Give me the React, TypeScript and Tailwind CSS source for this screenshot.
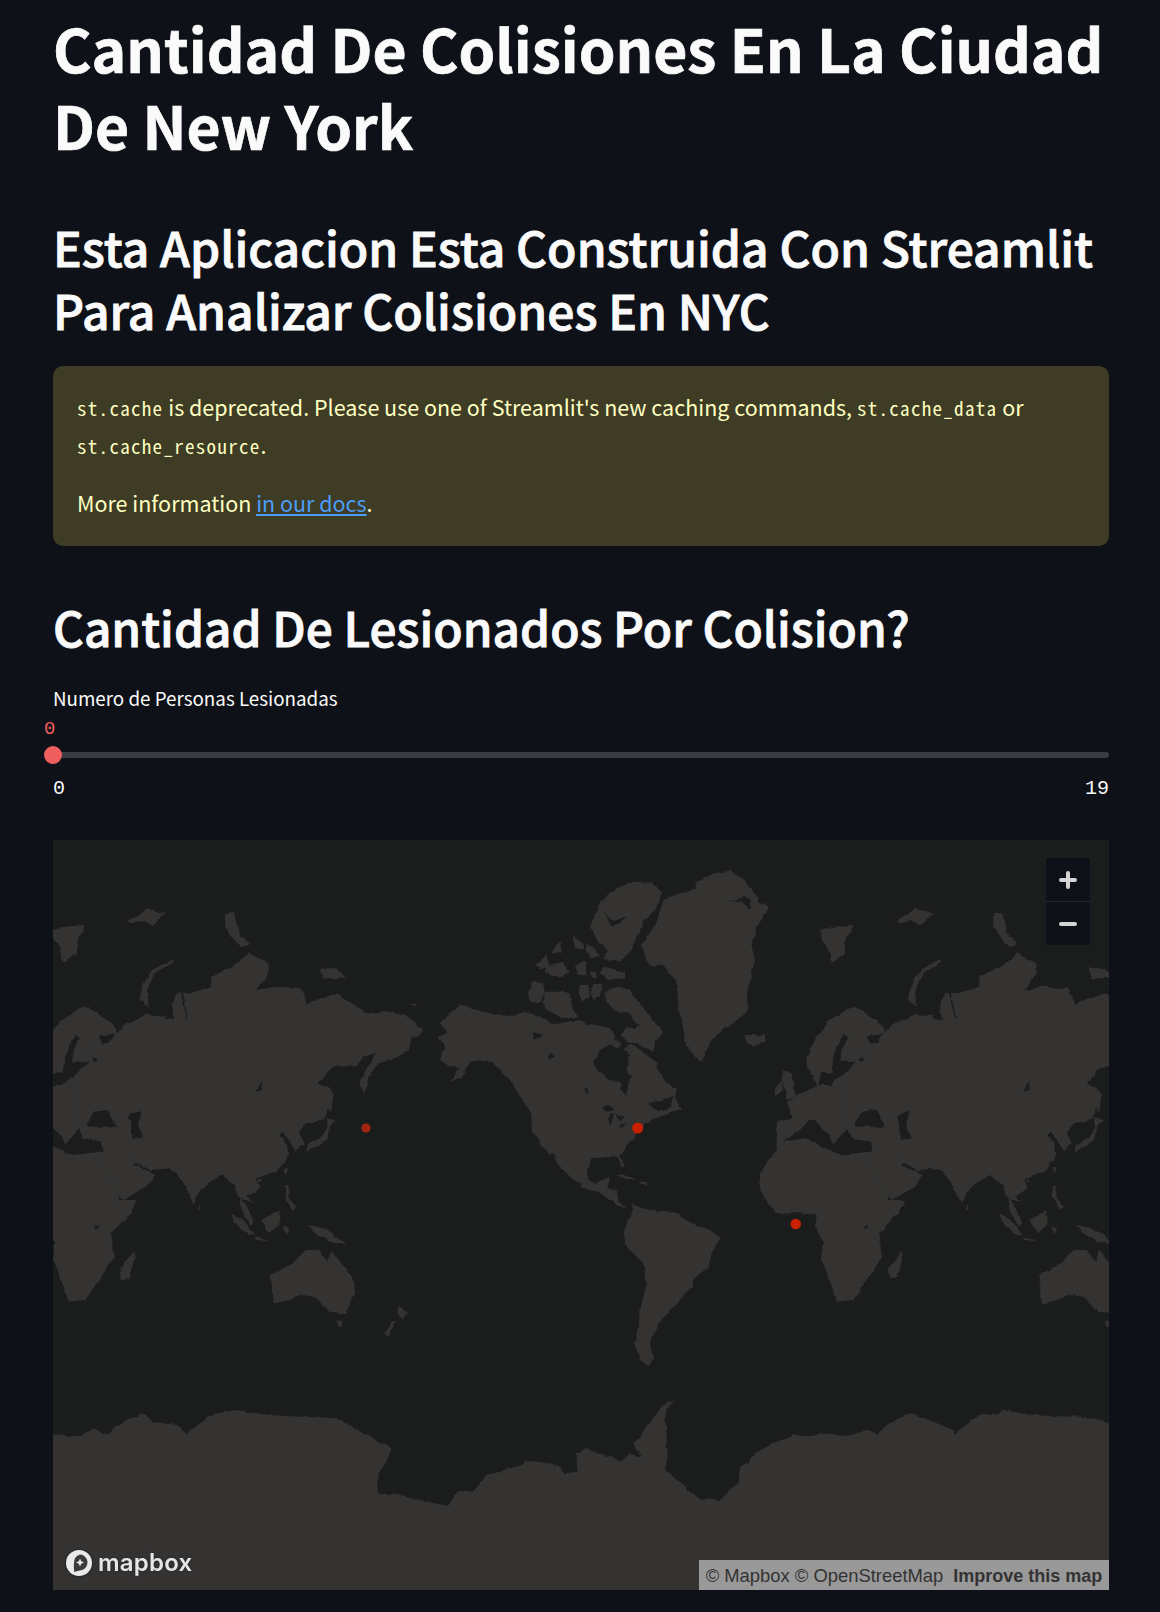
import React from "react";

type T = [number, number, number, number];
const Z11: T = [430, 860, 3, 3];
const Z12: T = [510, 1110, 3, 3];
const Z4: T = [600, 830, 3, 3];
const Z6: T = [600, 1200, 3, 3];
const Z3: T = [808, 830, 2.8, 3];
const Z5: T = [808, 1200, 2.8, 3];
const ZA: T = [40, 1200, 2.8, 3];

const conv = (t: T, s: string) =>
  s
    .trim()
    .split(/\s+/)
    .map((p) => {
      const [x, y] = p.split(",").map(Number);
      return `${(t[0] + x / t[2]).toFixed(1)},${(t[1] + y / t[3]).toFixed(1)}`;
    })
    .join(" ");

const land: [T, string][] = [
  [Z11, "35,482 62,458 95,433 130,447 175,455 225,470 275,458 312,462 345,478 365,492 400,490 440,478 470,492 500,495 540,505 555,525 540,555 510,570 492,600 500,630 540,660 575,670 570,690 585,705 605,650 590,625 600,585 580,570 600,550 640,575 680,610 680,625 710,670 740,690 735,710 755,750 720,760 695,770 670,775 640,800 600,835 585,870 350,870 305,800 305,760 280,725 240,660 190,610 150,600 120,605 95,650 60,665 90,625 60,620 30,600 45,560 25,530 50,520 30,490"],
  [Z11, "545,385 600,385 620,420 640,440 665,475 700,520 680,540 670,575 630,555 600,545 570,530 590,500 610,510 630,495 590,455 560,460 535,430 520,400"],
  [Z11, "545,530 575,555 560,565 540,550"],
  [Z11, "305,365 340,370 345,395 330,430 300,425 295,400"],
  [Z11, "345,395 400,395 420,400 430,450 445,470 400,475 350,450 340,430"],
  [Z11, "450,375 475,375 480,410 455,425 445,405"],
  [Z11, "490,375 515,372 510,410 490,420 482,400"],
  [Z11, "520,320 585,335 585,355 530,358 510,340"],
  [Z11, "510,125 560,85 610,65 665,68 700,95 680,140 640,190 620,230 605,270 570,305 520,300 530,270 500,240 480,200 500,150"],
  [Z11, "315,315 350,285 355,320 335,325"],
  [Z11, "345,320 395,305 420,335 385,355 350,340"],
  [Z11, "435,315 465,305 470,345 445,345"],
  [Z11, "380,250 395,245 395,280 365,280"],
  [Z11, "425,225 450,240 465,270 435,260"],
  [Z11, "470,245 490,260 510,290 480,295 470,270"],
  [Z11, "480,335 495,335 497,355 485,355"],
  [Z11, "800,65 855,40 900,32 935,55 965,90 990,125 1018,140 1000,170 980,200 965,260 975,300 965,340 950,400 955,450 920,485 880,505 840,540 825,585 815,605 790,590 765,540 755,480 745,440 740,365 700,315 660,318 640,275 635,255 680,185 700,120 760,100 795,85"],
  [Z11, "945,525 985,525 1005,520 1005,545 975,562 955,550"],
  [Z12, "65,0 65,65 105,115 130,150 185,205 235,240 265,245 320,285 345,295 345,290 325,270 320,240 292,235 300,205 290,200 255,222 235,205 232,175 245,145 290,140 325,140 335,172 345,170 330,135 350,110 380,70 440,10 445,0"],
  [Z12, "320,195 350,195 380,210 345,205 325,198"],
  [Z12, "390,215 412,215 410,222 392,222"],
  [Z6, "70,100 100,30 95,15 150,30 220,35 265,65 330,90 362,115 335,160 325,205 285,230 275,260 240,300 220,320 175,370 150,430 160,480 145,497 120,480 105,430 115,370 125,310 140,250 130,190 90,150 70,115"],
  [Z4, "530,925 530,875 578,865 560,815 600,795 650,765 640,735 620,710 620,680 650,620 690,570 760,528 840,580 855,610 880,580 950,560 1000,555 1000,1000 900,1000 530,1000"],
  [Z3, "100,700 230,600 300,550 330,565 375,570 370,520 385,490 395,490 415,580 395,605 415,565 400,490 420,490 480,470 480,440 540,410 585,370 640,400 640,430 605,480 660,470 730,475 750,525 760,515 830,490 870,520 920,550 980,545 1030,560 1070,600 1060,620 1040,620 1035,660 985,690 945,700 920,745 905,795 895,760 940,670 905,680 890,705 820,710 780,760 810,775 815,820 795,870 745,880 725,905 738,940 715,965 700,935 680,905 670,915 690,940 695,970 690,990 660,1025 605,1045 615,1075 580,1100 600,1120 555,1100 545,1065 510,1035 470,1060 445,1085 430,1125 395,1045 365,1015 310,1020 270,1000 255,980 262,1005 300,1020 320,1035 300,1070 235,1110 220,1095 170,995 175,975 100,975"],
  [Z4, "550,720 575,730 585,790 590,800 560,810 555,780 545,750"],
  [Z4, "525,770 545,755 550,780 525,795"],
  [Z4, "1020,390 1028,395 970,430 945,480 950,530 925,510 930,470 960,420"],
  [Z4, "660,300 700,290 755,285 755,305 735,320 735,370 695,395 680,350 665,330"],
  [Z4, "885,270 915,260 945,235 1000,250 960,285 930,270 900,280"],
  [Z4, "1180,250 1205,245 1225,320 1255,340 1230,352 1180,295"],
  [Z3, "785,415 825,415 860,440 825,445 795,445"],
  [Z3, "1035,522 1055,520 1050,527"],
  [Z3, "812,780 822,790 815,850 808,830"],
  [Z3, "800,865 830,870 810,885 805,925 785,945 745,965 750,945 790,920 805,890"],
  [Z3, "685,1015 695,1015 688,1035"],
  [Z3, "612,1045 622,1050 612,1058"],
  [Z3, "690,1065 697,1065 695,1095 700,1110 720,1130 705,1140 685,1095"],
  [Z3, "445,1125 452,1140 442,1140"],
  [Z3, "560,1100 580,1130 600,1180 590,1190 565,1140"],
  [Z5, "535,40 570,60 600,105 585,105 545,70"],
  [Z5, "600,112 650,125 605,120"],
  [Z5, "620,60 670,30 670,75 640,100"],
  [Z5, "680,80 695,85 690,105"],
  [Z5, "750,75 800,85 860,135 810,125 770,100"],
  [Z5, "645,225 700,195 745,150 780,150 805,185 815,150 880,240 880,280 855,340 810,335 770,290 730,285 700,300 655,310 650,265"],
  [Z5, "832,362 848,362 845,380 835,380"],
  [Z5, "1005,318 1028,340 1015,358 1000,340"],
  [Z5, "1000,360 975,405 963,400 985,365"],
  [Z6, "905,155 908,175 890,235 870,238 865,205"],
];

const water: [T, string][] = [
  [Z11, "310,515 340,525 315,540"],
  [Z11, "350,590 365,578 375,590 360,598"],
  [Z11, "462,685 470,682 476,700 468,700"],
  [Z11, "515,745 535,735 555,750 530,755"],
  [Z11, "540,760 552,760 545,795 537,795"],
  [Z11, "555,760 585,770 570,785"],
  [Z11, "565,795 590,790 575,800"],
  [Z11, "655,730 695,720 730,708 720,745 690,755 670,745"],
  [Z11, "515,150 545,180 590,170 565,190 545,200 530,170"],
  [Z11, "890,125 945,110 965,120 960,150 935,125 900,120"],
  [Z12, "122,130 132,130 155,185 145,185 125,150"],
  [Z4, "730,615 745,622 725,660 720,695 770,695 735,730 690,765 655,765 665,725 695,730 700,680 715,640"],
  [Z4, "800,620 850,610 830,640 810,640"],
  [Z4, "550,935 600,900 625,870 645,870 690,920 700,945 740,895 755,925 810,935 815,965 720,975 655,945 620,925 555,935"],
  [Z3, "135,875 150,845 190,840 215,890 135,890"],
  [Z3, "245,860 285,840 275,885 290,925 260,930 255,880"],
  [Z3, "603,785 620,755 620,780"],
  [Z3, "150,680 160,690 150,697 145,690"],
];

const africa = conv(
  Z4,
  "480,1030 510,985 555,935 620,925 655,945 720,975 815,965 805,990 860,1095 865,1110 915,1110 895,1150 838,1210 845,1280 800,1350 760,1410 710,1415 680,1330 663,1285 670,1235 645,1190 650,1155 600,1150 530,1150 490,1100 478,1060"
);

const antarctica =
  "50,1435 " +
  conv(ZA, "36,703 100,710 150,688 195,705 210,680 285,640 320,665 385,675 410,703 475,645 540,630 640,645 730,650 830,655 870,680 940,720 985,740 975,780 945,820 945,880 1000,885 1140,918 1175,870 1210,875 1250,825 1350,795 1360,780 1450,795 1470,820 1505,815 1500,760 1530,745 1568,760") +
  " " +
  conv(Z6, "0,760 30,770 65,785 85,760 125,770 100,730 135,690 155,660 185,620 225,600 195,630 203,770 195,810 240,845 275,880 305,900 330,895 358,903 415,845 420,800 445,790 460,765 510,735 580,703 620,710 680,700 740,710 800,690 835,703 850,680 915,645 935,640 1000,665 1060,690 1065,703 1135,645 1200,640 1205,630 1300,645 1405,650 1425,645 1527,670") +
  " 1115,1440 1115,1600 50,1600";

const LAND = "#343332";
const SEA = "#1b1c1c";

function WorldMap() {
  return (
    <svg viewBox="53 840 1056 750" width={1056} height={750} className="block">
      <defs>
        <filter id="coast" x="-5%" y="-5%" width="110%" height="110%">
          <feTurbulence type="fractalNoise" baseFrequency="0.12" numOctaves={2} seed={4} result="n" />
          <feDisplacementMap in="SourceGraphic" in2="n" scale={4} xChannelSelector="R" yChannelSelector="G" />
        </filter>
      </defs>
      <rect x={53} y={840} width={1056} height={750} fill={SEA} />
      <g filter="url(#coast)">
        {[0, -768].map((dx) => (
          <g key={dx} transform={`translate(${dx} 0)`}>
            {land.map(([t, s], i) => (
              <polygon key={i} points={conv(t, s)} fill={LAND} />
            ))}
            {water.map(([t, s], i) => (
              <polygon key={i} points={conv(t, s)} fill={SEA} />
            ))}
            <polygon points={africa} fill={LAND} />
            <polygon points={conv(Z6, "790,80 803,75 803,85 792,87")} fill={SEA} />
          </g>
        ))}
        <polygon points={antarctica} fill={LAND} />
      </g>
      <circle cx={366} cy={1128} r={4.6} fill="#a32412" />
      <circle cx={637.7} cy={1128} r={5.5} fill="#c92000" />
      <circle cx={795.7} cy={1224} r={5.3} fill="#c92000" />
    </svg>
  );
}

export default function App() {
  const sans = "font-['Noto_Sans_CJK_SC','Noto_Sans',sans-serif]";
  const code = "font-['Noto_Sans_Mono_CJK_SC','Liberation_Mono',monospace] text-[19px] tracking-[1.3px] leading-none";
  return (
    <div className={`h-[1612px] overflow-hidden bg-[#0e1117] pl-[53px] pr-[51px] text-white ${sans}`}>
      <h1 className="pt-[9px] text-[58.8px] leading-[77px] font-bold text-[#fafafa] [-webkit-text-stroke:0.7px_#fafafa]">
        Cantidad De Colisiones En La Ciudad De New York
      </h1>
      <h2 className="mt-[52px] text-[48px] leading-[63px] font-medium text-[#fafafa] [-webkit-text-stroke:0.9px_#fafafa]">
        Esta Aplicacion Esta Construida Con Streamlit Para Analizar Colisiones En NYC
      </h2>
      <div className="mt-[25px] h-[180px] rounded-[10px] bg-[#3e3c24] px-6 pt-[22px] text-[21.5px] leading-[38px] text-[#ffffc2]">
        <p>
          <span className={code}>st.cache</span> is deprecated. Please use one of Streamlit's new caching commands,{" "}
          <span className={code}>st.cache_data</span> or <span className={code}>st.cache_resource</span>.
        </p>
        <p className="mt-[20px]">
          More information <a className="text-[#4b9dfa] underline">in our docs</a>.
        </p>
      </div>
      <h3 className="mt-[49px] text-[47.8px] leading-[63px] font-medium text-[#fafafa] [-webkit-text-stroke:0.9px_#fafafa]">
        Cantidad De Lesionados Por Colision?
      </h3>
      <div className="mt-[27px] text-[18.8px] leading-[26px] text-[#fafafa]">Numero de Personas Lesionadas</div>
      <div className="relative mt-[8px] h-[21px]">
        <span className="absolute left-[-9px] top-0 font-['Liberation_Mono',monospace] text-[18.9px] leading-[21px] text-[#f05f5f]">
          0
        </span>
      </div>
      <div className="relative mt-[12px] h-[6px] rounded-full bg-[#3b3c46]">
        <div className="absolute left-[-9px] top-[-6px] h-[18px] w-[18px] rounded-full bg-[#f05f5f]" />
      </div>
      <div className="mt-[19px] flex justify-between font-['Liberation_Mono',monospace] text-[20px] leading-[24px] text-[#fafafa]">
        <span>0</span>
        <span>19</span>
      </div>
      <div className="relative mt-[39px] h-[750px] w-[1056px]">
        <WorldMap />
        <div className="absolute left-[993px] top-[18px] flex h-[87px] w-[44px] flex-col bg-[#0e1117]">
          <div className="flex h-[44px] items-center justify-center border-b border-[#262730]">
            <svg width="20" height="20" viewBox="0 0 20 20">
              <path d="M10 3v14M3 10h14" stroke="#d4d4d4" strokeWidth="4" strokeLinecap="round" />
            </svg>
          </div>
          <div className="flex flex-1 items-center justify-center">
            <svg width="20" height="20" viewBox="0 0 20 20">
              <path d="M3 10h14" stroke="#d4d4d4" strokeWidth="4" strokeLinecap="round" />
            </svg>
          </div>
        </div>
        <div className="absolute bottom-[12px] left-[11px] flex items-center gap-[4px]">
          <svg width="30" height="30" viewBox="0 0 30 30">
            <circle cx="15" cy="15" r="14.5" fill="#2a2a2a" />
            <circle cx="15" cy="15" r="13" fill="#eaeaea" />
            <path d="M16 6.5a8 8 0 0 1 2 15.6c-3 .8-6 1-7.5 2.2-.8-3-.8-6-.5-9A8 8 0 0 1 16 6.5Z" fill="#3a3a3a" />
            <path d="M16 10.5l1.2 2.8 2.8 1.2-2.8 1.2-1.2 2.8-1.2-2.8-2.8-1.2 2.8-1.2Z" fill="#eaeaea" />
          </svg>
          <span className="font-['Inter',sans-serif] text-[24px] leading-[30px] font-semibold tracking-[0.2px] text-[#e6e6e6] [text-shadow:0_0_2px_#222]">
            mapbox
          </span>
        </div>
        <div className="absolute bottom-0 right-0 flex h-[30px] w-[410px] items-center justify-center gap-[10px] bg-[#999999] pt-[2px] font-['Liberation_Sans',sans-serif] text-[#333333]">
          <span className="text-[18.4px]">© Mapbox © OpenStreetMap</span>
          <span className="text-[18px] font-bold">Improve this map</span>
        </div>
      </div>
    </div>
  );
}
